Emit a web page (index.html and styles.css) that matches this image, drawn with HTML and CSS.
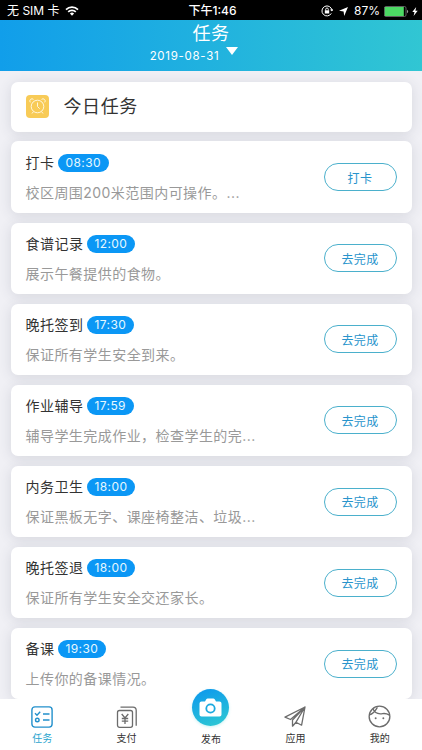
FILE: index.html
```html
<!DOCTYPE html>
<html lang="zh-CN">
<head>
  <meta charset="UTF-8" />
  <meta name="viewport" content="width=device-width, initial-scale=1.0"/>
  <title>任务</title>
  <link rel="stylesheet" href="styles.css">
</head>
<body>
  <div class="app">
    <div class="status-bar">
      <div class="status-left">
        <span>无 SIM 卡</span>
        <svg class="wifi" width="14" height="10" viewBox="0 0 14 10" fill="none" stroke="#fff" stroke-width="1.7">
          <path d="M1 3.6a8.5 8.5 0 0 1 12 0M3.2 5.9a5.4 5.4 0 0 1 7.6 0"/>
          <path d="M7 9.8L4.9 7.6a3 3 0 0 1 4.2 0z" fill="#fff" stroke="none"/>
        </svg>
      </div>
      <div class="status-time">下午1:46</div>
      <div class="status-right">
        <svg class="lock" width="12" height="12" viewBox="0 0 12 12" fill="none" stroke="#fff">
          <path d="M10.3 8.4A5 5 0 1 1 10.9 5.2M9.4 4.8l1.6 1.2.8-1.8"/>
          <path d="M4.7 5.5V4.3a1.3 1.3 0 0 1 2.6 0v1.2" stroke-width=".9"/>
          <rect x="3.8" y="5.3" width="4.4" height="3.2" fill="#fff" stroke="none"/>
        </svg>
        <svg class="locate" width="9" height="9" viewBox="0 0 9 9"><path d="M9 0L5.2 9 4.6 4.4 0 3.8z" fill="#fff"/></svg>
        <span>87%</span>
        <svg class="battery" width="25" height="11" viewBox="0 0 25 11">
          <rect x=".4" y=".5" width="21.6" height="10" rx="1.5" fill="none" stroke="#777" stroke-width=".8"/>
          <rect x=".8" y="1" width="19" height="9" fill="#4cd964"/>
          <path d="M23 3.7a2 2 0 0 1 0 3.6z" fill="#999"/>
        </svg>
        <svg class="bolt" width="6" height="9" viewBox="0 0 6 9"><path d="M4.2 0L.3 5h2.2l-.9 4L5.7 3.7H3.4z" fill="#fff"/></svg>
      </div>
    </div>

    <header class="header">
      <h1>任务</h1>
      <div class="date"><span>2019-08-31</span><i class="arrow"></i></div>
    </header>

    <main class="content">
      <div class="card today">
        <svg width="23" height="23" viewBox="0 0 23 23" fill="none" stroke="#fff6dc">
          <rect width="23" height="23" rx="4" fill="#f8cb57" stroke="none"/>
          <circle cx="11.5" cy="11.5" r="6.3"/>
          <path d="M11.5 7.5v4l2.2 2.2M4.3 7.4a2.2 2.2 0 0 1 3.2-3M18.7 7.4a2.2 2.2 0 0 0-3.2-3M7.3 16.8L6 18.5M15.7 16.8l1.3 1.7"/>
        </svg>
        <h2>今日任务</h2>
      </div>

      <div class="card task">
        <div class="info">
          <div class="name">打卡<span class="time">08:30</span></div>
          <div class="desc">校区周围200米范围内可操作。...</div>
        </div>
        <button class="btn">打卡</button>
      </div>
      <div class="card task">
        <div class="info">
          <div class="name">食谱记录<span class="time">12:00</span></div>
          <div class="desc">展示午餐提供的食物。</div>
        </div>
        <button class="btn">去完成</button>
      </div>
      <div class="card task">
        <div class="info">
          <div class="name">晚托签到<span class="time">17:30</span></div>
          <div class="desc">保证所有学生安全到来。</div>
        </div>
        <button class="btn">去完成</button>
      </div>
      <div class="card task">
        <div class="info">
          <div class="name">作业辅导<span class="time">17:59</span></div>
          <div class="desc">辅导学生完成作业，检查学生的完...</div>
        </div>
        <button class="btn">去完成</button>
      </div>
      <div class="card task">
        <div class="info">
          <div class="name">内务卫生<span class="time">18:00</span></div>
          <div class="desc">保证黑板无字、课座椅整洁、垃圾...</div>
        </div>
        <button class="btn">去完成</button>
      </div>
      <div class="card task">
        <div class="info">
          <div class="name">晚托签退<span class="time">18:00</span></div>
          <div class="desc">保证所有学生安全交还家长。</div>
        </div>
        <button class="btn">去完成</button>
      </div>
      <div class="card task">
        <div class="info">
          <div class="name">备课<span class="time">19:30</span></div>
          <div class="desc">上传你的备课情况。</div>
        </div>
        <button class="btn">去完成</button>
      </div>
    </main>

    <nav class="tabbar">
      <a class="tab active">
        <svg width="22" height="22" viewBox="0 0 22 22" fill="none" stroke="#2290cc" stroke-width="1.4">
          <rect x=".9" y=".9" width="20.2" height="20.2" rx="3"/>
          <path d="M4 7.2l2 2 3.2-3.5M12 8h6.5M12 14h6.5"/>
          <circle cx="6.3" cy="14" r="1.8"/>
        </svg>
        <span>任务</span>
      </a>
      <a class="tab">
        <svg width="22" height="22" viewBox="0 0 22 22" fill="none" stroke="#6c6c6c" stroke-width="1.3">
          <rect x="1.5" y="4.5" width="15" height="16.8" rx="2"/>
          <path d="M4.5 1.2H17a3.2 3.2 0 0 1 3.2 3.2v15.4M5.7 8l3.3 4 3.3-4M9 12v6M5.8 12.5h6.4M5.8 15.2h6.4"/>
        </svg>
        <span>支付</span>
      </a>
      <a class="tab publish">
        <span class="circle">
          <svg width="23" height="19" viewBox="0 0 23 19">
            <path d="M2.5 3.5H6l1.3-2.2q.5-.8 1.4-.8h5.6q.9 0 1.4.8L17 3.5h3.5q2 0 2 2v11q0 2-2 2h-18q-2 0-2-2v-11q0-2 2-2z" fill="#fff"/>
            <circle cx="11.5" cy="10.5" r="4.2" fill="#fff" stroke="#1ba9df" stroke-width="1.8"/>
          </svg>
        </span>
        <span>发布</span>
      </a>
      <a class="tab">
        <svg width="22" height="22" viewBox="0 0 22 22" fill="none" stroke="#6c6c6c" stroke-width="1.3" stroke-linejoin="round">
          <path d="M21 1L1 11.2l5.5 2.3L21 1l-3.4 18.2-5.6-3L21 1 8.5 14v6.2l3.5-4"/>
        </svg>
        <span>应用</span>
      </a>
      <a class="tab">
        <svg width="23" height="23" viewBox="0 0 24 24" fill="none" stroke="#6c6c6c" stroke-width="1.4">
          <circle cx="12" cy="12" r="10.8"/>
          <path d="M1.5 10.2C5 9.5 7.5 6.5 9.8 2.5M5.2 4c1.5 4 5 5.8 10 5 2.5-.4 5 .2 7.2 1.5"/>
          <circle cx="8" cy="13.8" r="1" fill="#6c6c6c" stroke="none"/>
          <circle cx="16" cy="13.8" r="1" fill="#6c6c6c" stroke="none"/>
        </svg>
        <span>我的</span>
      </a>
    </nav>
  </div>
</body>
</html>
```

FILE: styles.css
```css
* {
  box-sizing: border-box;
}

body {
  margin: 0;
  font-family: "Inter", "Noto Sans CJK SC", sans-serif;
  background: #f0f0f5;
}

.app {
  display: flex;
  flex-direction: column;
  width: 422px;
  height: 750px;
  overflow: hidden;
}

.status-bar {
  display: grid;
  grid-template-columns: 1fr auto 1fr;
  align-items: center;
  flex: none;
  height: 20px;
  padding: 1px 4px 0 7px;
  background: #000;
  color: #fff;
  font-size: 12px;
  line-height: 20px;
}

.status-left,
.status-right {
  display: flex;
  align-items: center;
}

.status-left {
  gap: 5px;
}

.status-right {
  justify-content: flex-end;
}

.status-time {
  font-weight: 500;
}

.lock {
  margin-right: 6px;
}

.locate {
  margin-right: 6px;
}

.battery {
  margin: 0 3px 0 4px;
}

.header {
  flex: none;
  height: 51px;
  background: linear-gradient(to right, #119eea, #31c6d3);
  color: #fff;
  text-align: center;
}

.header h1 {
  margin: 0;
  font-size: 18px;
  font-weight: 400;
  line-height: 27px;
  letter-spacing: 0.5px;
}

.date {
  display: flex;
  justify-content: center;
  gap: 7px;
  padding-right: 34px;
  font-size: 11.5px;
  line-height: 19px;
  letter-spacing: 0.7px;
}

.arrow {
  width: 0;
  height: 0;
  border: 6.5px solid transparent;
  border-top: 8px solid #fff;
  border-bottom: 0;
}

.content {
  flex: 1;
  min-height: 0;
  overflow: hidden;
  padding: 10.7px 10.5px 0;
}

.card {
  display: flex;
  align-items: center;
  height: 71.3px;
  margin-bottom: 9.8px;
  padding: 0 15px;
  background: #fff;
  border-radius: 7px;
  box-shadow: 0 2px 13px rgba(60, 65, 85, 0.14);
}

.today {
  height: 50px;
}

.today h2 {
  margin: 0 0 0 15px;
  color: #333;
  font-size: 18px;
  font-weight: 400;
  line-height: 26px;
  letter-spacing: 0.6px;
}

.info {
  flex: 1;
}

.name {
  display: flex;
  align-items: center;
  color: #333;
  font-size: 14px;
  line-height: 18px;
  letter-spacing: 0.5px;
}

.time {
  margin-left: 3px;
  padding: 0 8px;
  border-radius: 9px;
  background: #0b97f5;
  color: #e6f8ff;
  font-size: 12px;
  letter-spacing: 0.4px;
}

.desc {
  margin-top: 11px;
  margin-bottom: -2px;
  color: #999;
  font-size: 14px;
  line-height: 20px;
  letter-spacing: 0.45px;
  white-space: nowrap;
}

.btn {
  width: 73px;
  height: 28px;
  padding: 0;
  border: 1px solid #4bb0cc;
  border-radius: 14px;
  background: #fff;
  color: #2894cc;
  font-family: inherit;
  font-size: 12px;
  letter-spacing: 0.4px;
}

.tabbar {
  display: grid;
  grid-template-columns: repeat(5, 1fr);
  grid-template-rows: 51px;
  flex: none;
  height: 51px;
  background: #fff;
  z-index: 1;
}

.tab {
  display: flex;
  flex-direction: column;
  align-items: center;
  justify-content: flex-end;
  gap: 3px;
  padding-bottom: 4px;
  color: #333;
  font-size: 10px;
  line-height: 15px;
}

.tab svg {
  flex: none;
}

.active {
  color: #2aa5cf;
}

.publish {
  gap: 6px;
  padding-bottom: 3px;
}

.circle {
  display: flex;
  align-items: center;
  justify-content: center;
  flex: none;
  width: 37px;
  height: 37px;
  border-radius: 50%;
  background: linear-gradient(160deg, #0b96ee, #2fcbd2);
  box-shadow: 0 1px 3px rgba(47, 203, 210, 0.25);
}
```
